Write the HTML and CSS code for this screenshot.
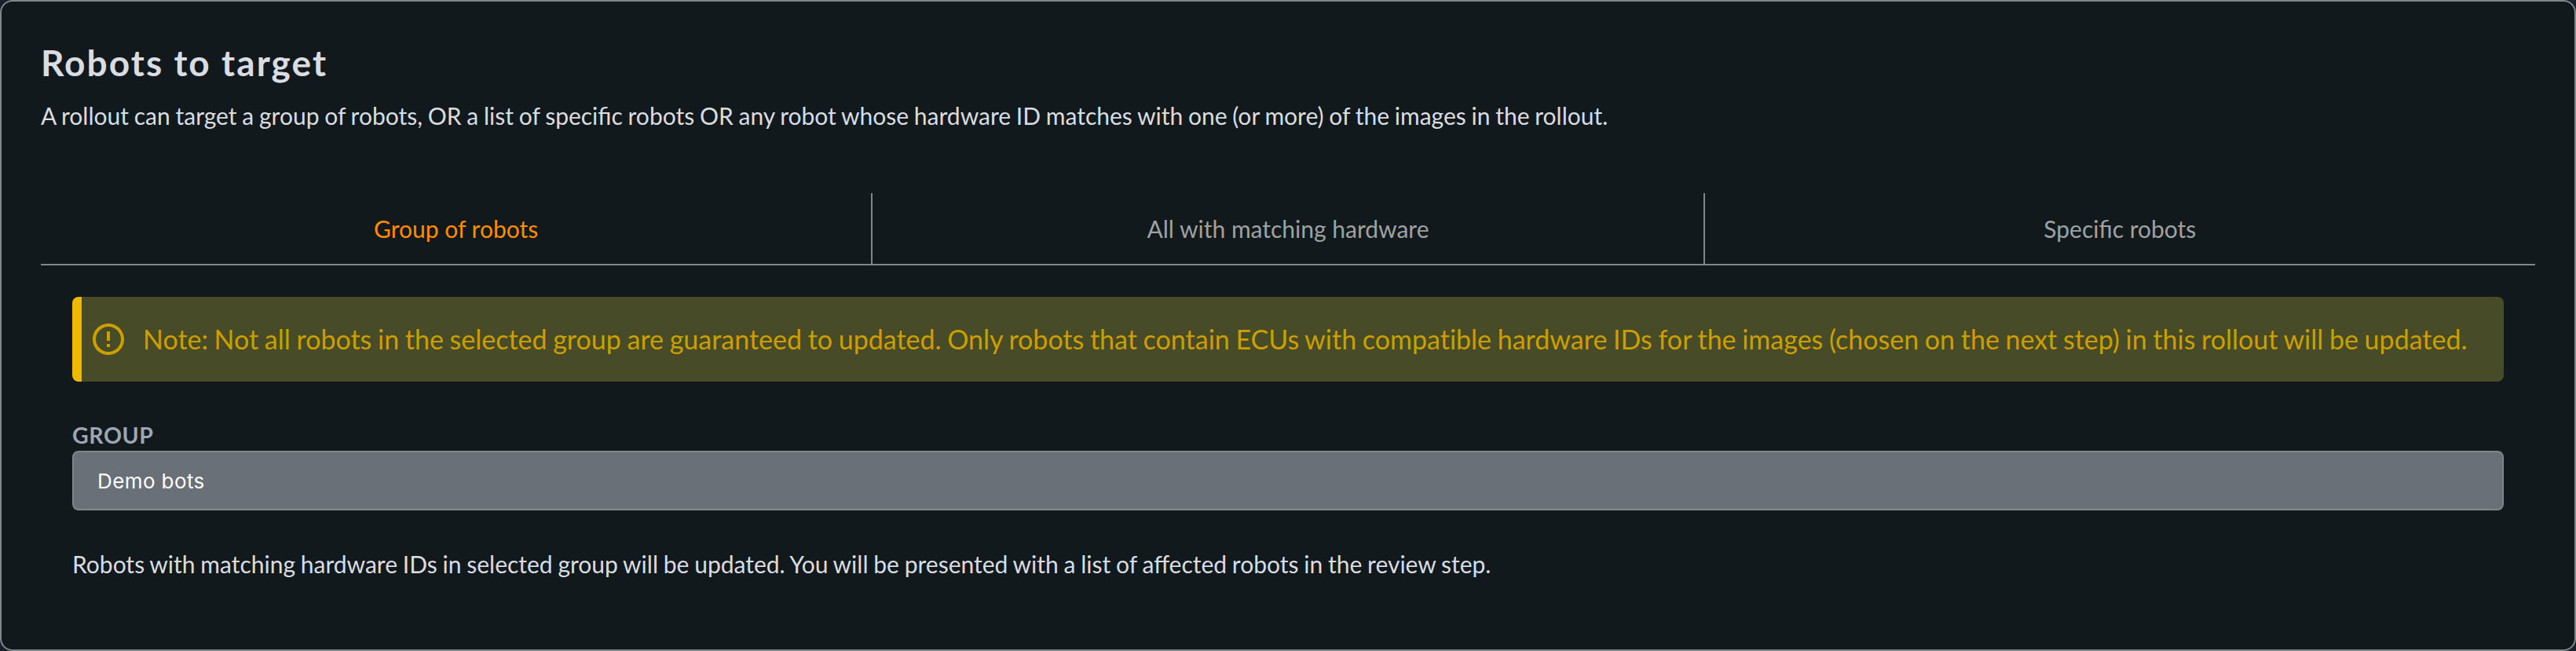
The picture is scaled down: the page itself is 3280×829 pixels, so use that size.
FILE: index.html
```html
<!DOCTYPE html>
<html lang="en">
<head>
<meta charset="utf-8">
<title>Robots to target</title>
<link rel="stylesheet" href="styles.css">
</head>
<body>
<section class="card">
  <h2 class="title">Robots to target</h2>
  <p class="lead">A rollout can target a group of robots, OR a list of specific robots OR any robot whose hardware ID matches with one (or more) of the images in the rollout.</p>
  <nav class="tabs">
    <a class="tab active">Group of robots</a>
    <a class="tab">All with matching hardware</a>
    <a class="tab">Specific robots</a>
  </nav>
  <div class="panel">
    <div class="alert">
      <svg class="alert-icon" viewBox="0 0 24 24"><path fill="currentColor" d="M11 15h2v2h-2zm0-8h2v6h-2zm1-5C6.47 2 2 6.5 2 12s4.47 10 10 10 10-4.48 10-10S17.52 2 12 2zm0 18a8 8 0 1 1 0-16 8 8 0 0 1 0 16z"/></svg>
      <span class="alert-text">Note: Not all robots in the selected group are guaranteed to updated. Only robots that contain ECUs with compatible hardware IDs for the images (chosen on the next step) in this rollout will be updated.</span>
    </div>
    <div class="label">GROUP</div>
    <div class="select"><span class="value">Demo bots</span></div>
    <p class="hint">Robots with matching hardware IDs in selected group will be updated. You will be presented with a list of affected robots in the review step.</p>
  </div>
</section>
</body>
</html>
```
FILE: styles.css
```css
* { box-sizing: border-box; }
body { margin: 0; background: #1a202c; font-family: Lato, sans-serif; color: #d9dce1; }
.card { height: 829px; border: 2px solid #7f8789; border-radius: 16px; background: #11191c; padding: 50px; }
.title { margin: -2px 0 0; height: 60px; line-height: 60px; font-size: 46px; font-weight: 700; letter-spacing: 2.05px; white-space: nowrap; }
.lead { margin: 19px 0 0; height: 36px; line-height: 36px; font-size: 30px; word-spacing: -0.93px; white-space: nowrap; }
.tabs { display: flex; margin-top: 81px; height: 92px; border-bottom: 2px solid #7f8789; }
.tab { box-sizing: content-box; flex: 1; text-align: center; line-height: 90px; font-size: 30px; color: #9fa1a2; }
.tab + .tab { border-left: 2px solid #7f8789; }
.tab.active { color: #ff8c00; }
.panel { padding: 40px; }
.alert { display: flex; align-items: center; height: 108px; border-left: 12px solid #f0b800; border-radius: 8px; background: #484b27; color: #cc9f00; padding-left: 10px; }
.alert-icon { width: 48px; height: 48px; flex: none; }
.alert-text { margin-left: 20px; font-size: 34px; line-height: 44px; word-spacing: -1.05px; white-space: nowrap; font-variant-ligatures: none; }
.label { margin-top: 50px; height: 38px; line-height: 36px; font-size: 28.5px; font-weight: 700; letter-spacing: 0.6px; color: #9ea5b3; }
.select { height: 76px; display: flex; align-items: center; padding: 0 30px; border: 2px solid #7f8789; border-radius: 8px; background: #697077; color: #fff; }
.value { font-family: Inter, sans-serif; font-size: 26px; letter-spacing: 0.4px; }
.hint { margin: 50px 0 0; line-height: 36px; font-size: 30px; word-spacing: -0.9px; white-space: nowrap; }
```
